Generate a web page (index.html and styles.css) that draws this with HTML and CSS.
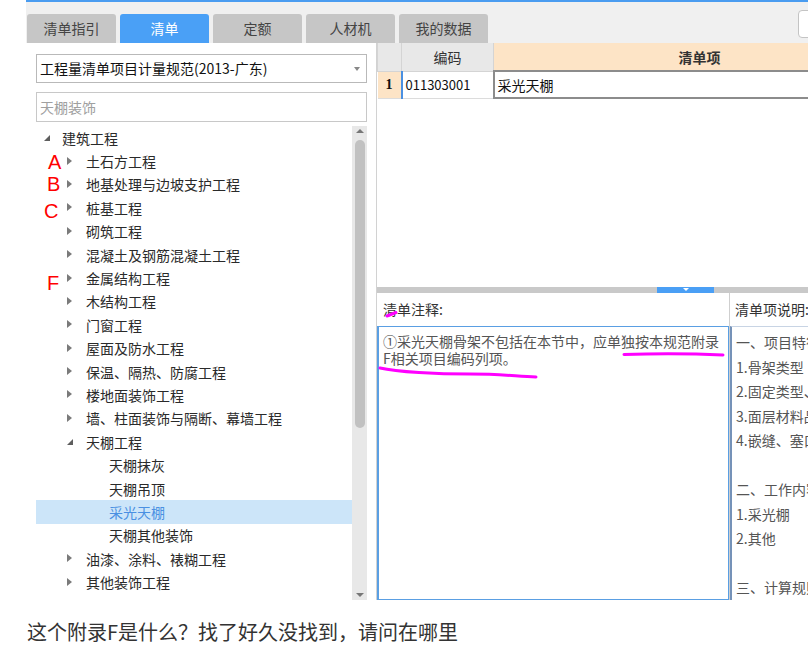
FILE: index.html
```html
<!DOCTYPE html>
<html lang="zh-CN">
<head>
    <meta charset="UTF-8">
    <title>清单</title>
    <link rel="stylesheet" href="styles.css">
</head>
<body>
    <div class="app">
        <div class="tabbar">
            <div class="tab">清单指引</div>
            <div class="tab active">清单</div>
            <div class="tab">定额</div>
            <div class="tab">人材机</div>
            <div class="tab">我的数据</div>
            <div class="tabbar-tool"></div>
        </div>

        <div class="main">
            <aside class="lib">
                <div class="select">工程量清单项目计量规范(2013-广东)</div>
                <div class="search">天棚装饰</div>
                <div class="tree-wrap">
                    <ul class="tree">
                        <li class="node lv0 open"><i class="tog"></i>建筑工程</li>
                        <li class="node lv1"><span class="ann ann-a">A</span><i class="tog"></i>土石方工程</li>
                        <li class="node lv1"><span class="ann ann-b">B</span><i class="tog"></i>地基处理与边坡支护工程</li>
                        <li class="node lv1"><span class="ann ann-c">C</span><i class="tog"></i>桩基工程</li>
                        <li class="node lv1"><i class="tog"></i>砌筑工程</li>
                        <li class="node lv1"><i class="tog"></i>混凝土及钢筋混凝土工程</li>
                        <li class="node lv1"><span class="ann ann-f">F</span><i class="tog"></i>金属结构工程</li>
                        <li class="node lv1"><i class="tog"></i>木结构工程</li>
                        <li class="node lv1"><i class="tog"></i>门窗工程</li>
                        <li class="node lv1"><i class="tog"></i>屋面及防水工程</li>
                        <li class="node lv1"><i class="tog"></i>保温、隔热、防腐工程</li>
                        <li class="node lv1"><i class="tog"></i>楼地面装饰工程</li>
                        <li class="node lv1"><i class="tog"></i>墙、柱面装饰与隔断、幕墙工程</li>
                        <li class="node lv1 open"><i class="tog"></i>天棚工程</li>
                        <li class="node lv2">天棚抹灰</li>
                        <li class="node lv2">天棚吊顶</li>
                        <li class="node lv2 selected">采光天棚</li>
                        <li class="node lv2">天棚其他装饰</li>
                        <li class="node lv1"><i class="tog"></i>油漆、涂料、裱糊工程</li>
                        <li class="node lv1"><i class="tog"></i>其他装饰工程</li>
                        <li class="node lv1"><i class="tog"></i>拆除工程</li>
                    </ul>
                    <div class="vscroll">
                        <span class="arr-up"></span>
                        <span class="thumb"></span>
                        <span class="arr-down"></span>
                    </div>
                </div>
            </aside>

            <section class="work">
                <div class="grid-area">
                    <table class="grid">
                        <colgroup>
                            <col class="c-num">
                            <col class="c-code">
                            <col class="c-name">
                        </colgroup>
                        <tr>
                            <th></th>
                            <th>编码</th>
                            <th class="item">清单项</th>
                        </tr>
                        <tr>
                            <td class="rownum">1</td>
                            <td class="code">011303001</td>
                            <td class="name">采光天棚</td>
                        </tr>
                    </table>
                </div>

                <div class="splitter"><span class="grip"></span></div>

                <div class="notes">
                    <div class="note-col note-main">
                        <div class="note-head">清单注释:</div>
                        <div class="note-body">①采光天棚骨架不包括在本节中，应单独按本规范附录<br>F相关项目编码列项。</div>
                    </div>
                    <div class="note-col note-side">
                        <div class="note-head">清单项说明:</div>
                        <div class="side-body">
                            <div>一、项目特征</div>
                            <div>1.骨架类型</div>
                            <div>2.固定类型、固定材料品种、规格</div>
                            <div>3.面层材料品种、规格</div>
                            <div>4.嵌缝、塞口材料种类</div>
                            <div>&nbsp;</div>
                            <div>二、工作内容</div>
                            <div>1.采光棚</div>
                            <div>2.其他</div>
                            <div>&nbsp;</div>
                            <div>三、计算规则</div>
                        </div>
                    </div>
                </div>

                <!-- pen marks drawn over the screenshot -->
                <svg class="marks" width="431" height="557" viewBox="0 0 431 557">
                    <path d="M10 273 L19 269.5"/>
                    <path d="M247 311.5 Q 300 310 346 312"/>
                    <path d="M3 325 C 20 329, 60 331, 93 331 S 140 333.5, 159 334"/>
                </svg>
            </section>
        </div>
    </div>

    <p class="question">这个附录F是什么？找了好久没找到，请问在哪里</p>
</body>
</html>
```

FILE: styles.css
```css
* {
    box-sizing: border-box;
}

body {
    margin: 0;
    background: #fff;
    font-family: "Noto Sans CJK SC", "Noto Sans", sans-serif;
    overflow: hidden;
}

.app {
    margin-left: 26px;
    width: 782px;
    height: 600px;
    border-top: 2px solid #4a9cf0;
    display: flex;
    flex-direction: column;
    overflow: hidden;
}

/* tabs */
.tabbar {
    height: 41px;
    flex: none;
    background: #f0f0f0;
    display: flex;
    align-items: flex-end;
    gap: 4px;
    padding-left: 1px;
    overflow: hidden;
}

.tab {
    width: 89px;
    height: 29px;
    background: #c6c6c6;
    border-radius: 3px 3px 0 0;
    font-size: 14px;
    line-height: 29px;
    text-align: center;
    color: #444;
}

.tab.active {
    background: #4aa0f6;
    color: #fff;
}

.tabbar-tool {
    margin-left: auto;
    margin-right: -12px;
    align-self: flex-start;
    margin-top: 8px;
    width: 22px;
    height: 28px;
    flex: none;
    border: 1px solid #c4c4c4;
    border-radius: 4px;
    background: #fff;
}

.main {
    flex: 1;
    display: flex;
    min-height: 0;
}

/* left library panel */
.lib {
    width: 351px;
    flex: none;
    border-right: 1px solid #d2d2d2;
    padding: 11px 9px 0 10px;
    display: flex;
    flex-direction: column;
}

.select {
    height: 29px;
    border: 1px solid #b9b9b9;
    position: relative;
    font-size: 14px;
    line-height: 27px;
    padding-left: 3px;
    color: #111;
}

.select::after {
    content: "";
    position: absolute;
    right: 6px;
    top: 12px;
    border-top: 4px solid #888;
    border-left: 3.5px solid transparent;
    border-right: 3.5px solid transparent;
}

.search {
    margin-top: 9px;
    height: 30px;
    border: 1px solid #c8c8c8;
    font-size: 14px;
    line-height: 28px;
    padding-left: 3px;
    color: #a0a0a0;
}

.tree-wrap {
    margin-top: 4px;
    flex: 1;
    display: flex;
    min-height: 0;
}

.tree {
    flex: 1;
    list-style: none;
    margin: 0;
    padding: 0;
    overflow: hidden;
}

.node {
    position: relative;
    height: 23.4px;
    display: flex;
    align-items: center;
    font-size: 14px;
    color: #2a2a2a;
    white-space: nowrap;
}

.lv0 {
    padding-left: 8px;
}

.lv1 {
    padding-left: 31px;
}

.lv2 {
    padding-left: 73px;
}

.tog {
    flex: none;
    display: block;
    width: 19px;
    height: 9px;
    position: relative;
}

.lv0 .tog {
    width: 18px;
}

.tog::before {
    content: "";
    position: absolute;
    left: 0;
    top: 0;
    border-left: 5px solid #7a7a7a;
    border-top: 4.5px solid transparent;
    border-bottom: 4.5px solid transparent;
}

.open .tog::before {
    top: 2px;
    border-top: none;
    border-bottom: 6px solid #5e5e5e;
    border-left: 6px solid transparent;
}

.node.selected {
    background: #cce5f9;
    color: #4a90e2;
}

/* red letters written on the screenshot */
.ann {
    position: absolute;
    font-family: "Liberation Sans", Arial, sans-serif;
    font-size: 20px;
    line-height: 20px;
    color: #ff0000;
}

.ann-a {
    left: 12px;
    top: 3px;
}

.ann-b {
    left: 11px;
    top: 1px;
}

.ann-c {
    left: 8px;
    top: 5px;
}

.ann-f {
    left: 11px;
    top: 7px;
}

.vscroll {
    width: 15px;
    flex: none;
    background: #e8e8e8;
    display: flex;
    flex-direction: column;
    align-items: center;
    padding: 3px 0 3px;
}

.arr-up {
    border-bottom: 4px solid #777;
    border-left: 4px solid transparent;
    border-right: 4px solid transparent;
}

.arr-down {
    margin-top: auto;
    border-top: 4px solid #777;
    border-left: 4px solid transparent;
    border-right: 4px solid transparent;
}

.thumb {
    margin-top: 7px;
    width: 10px;
    height: 288px;
    border-radius: 5px;
    background: #c1c1c1;
}

/* right work area */
.work {
    flex: 1;
    min-width: 0;
    display: flex;
    flex-direction: column;
    position: relative;
    overflow: hidden;
}

.grid-area {
    height: 244px;
    flex: none;
}

.grid {
    border-collapse: collapse;
    table-layout: fixed;
    width: 528px;
}

.c-num {
    width: 24px;
}

.c-code {
    width: 92px;
}

.c-name {
    width: 412px;
}

.grid th {
    height: 28px;
    padding: 0;
    background: #e8e8e8;
    border: 1px solid #d4d4d4;
    border-top: none;
    font-weight: normal;
    font-size: 14px;
    color: #333;
}

.grid th.item {
    background: #fde4c6;
    font-weight: bold;
}

.grid td {
    height: 27px;
    padding: 0 3px;
    font-size: 14px;
    color: #111;
    border-bottom: 1px solid #dcdcdc;
    white-space: nowrap;
}

.grid td.rownum {
    background: #fde4c6;
    font-family: "Liberation Serif", serif;
    font-weight: bold;
    text-align: center;
    padding: 0;
}

.grid td.code {
    border-left: 2px solid #4a90e2;
    font-size: 13px;
}

.grid td.name {
    border: 2px solid #8c8c8c;
}

.splitter {
    height: 6px;
    flex: none;
    background: #c9c9c9;
    display: flex;
    padding-left: 280px;
}

.grip {
    width: 57px;
    background: #4a9ff5;
    display: flex;
    justify-content: center;
    padding-top: 1px;
}

.grip::after {
    content: "";
    border-top: 3px solid #fff;
    border-left: 3.5px solid transparent;
    border-right: 3.5px solid transparent;
    height: 0;
}

.notes {
    flex: 1;
    display: flex;
    min-height: 0;
}

.note-col {
    display: flex;
    flex-direction: column;
}

.note-main {
    width: 353px;
    flex: none;
    border-right: 1px solid #cfcfcf;
}

.note-side {
    flex: 1;
    min-width: 0;
}

.note-head {
    height: 33px;
    flex: none;
    font-size: 14px;
    line-height: 33px;
    color: #333;
    padding-left: 6px;
    white-space: nowrap;
}

.note-side .note-head {
    padding-left: 5px;
}

.note-body {
    flex: 1;
    border: 1px solid #5a9fe3;
    border-left-width: 2px;
    padding: 6px 4px 0 4px;
    font-size: 14px;
    line-height: 17px;
    color: #555;
}

.side-body {
    flex: 1;
    border-left: 2px solid #7592b8;
    border-top: 1px solid #c8d4e4;
    padding: 3px 0 0 4px;
    font-size: 14px;
    line-height: 24.5px;
    color: #555;
    white-space: nowrap;
    overflow: hidden;
}

.marks {
    position: absolute;
    left: 0;
    top: 0;
    pointer-events: none;
}

.marks path {
    fill: none;
    stroke: #ff00ff;
    stroke-width: 3;
    stroke-linecap: round;
}

.question {
    margin: 19px 0 0 27px;
    font-size: 20px;
    line-height: 26px;
    color: #333;
}
```
